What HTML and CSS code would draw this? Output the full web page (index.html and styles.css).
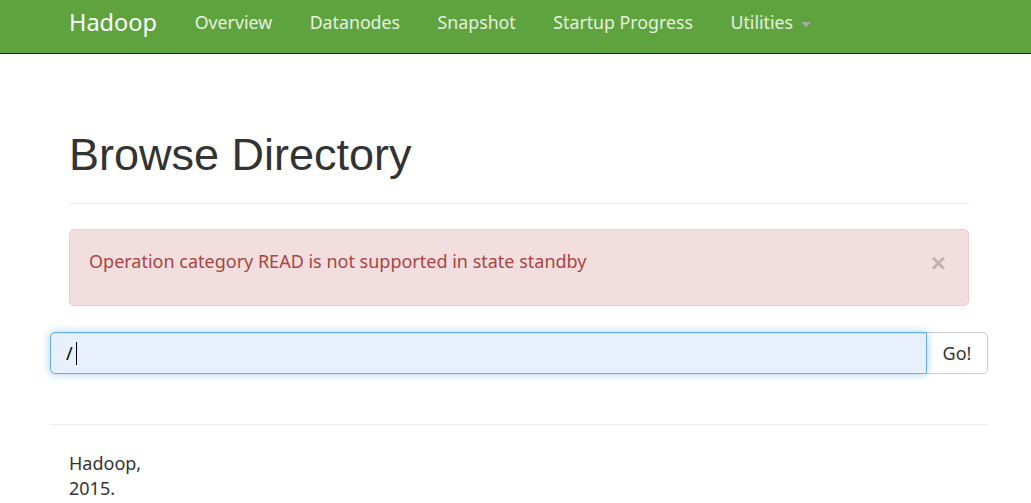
FILE: index.html
```html
<!DOCTYPE html>
<html lang="en">
<head>
<meta charset="utf-8">
<title>Browsing HDFS</title>
<link rel="stylesheet" href="styles.css">
</head>
<body>
<header class="navbar">
  <div class="navbar-inner">
    <a class="brand" href="#">Hadoop</a>
    <nav class="nav">
      <a class="nav-link" href="#">Overview</a>
      <a class="nav-link" href="#">Datanodes</a>
      <a class="nav-link" href="#">Snapshot</a>
      <a class="nav-link" href="#">Startup Progress</a>
      <a class="nav-link" href="#">Utilities <span class="caret"></span></a>
    </nav>
  </div>
</header>

<main class="container">
  <div class="page-header">
    <h1>Browse Directory</h1>
  </div>

  <div class="alert">
    <button type="button" class="close">&times;</button>
    <div class="alert-body">Operation category READ is not supported in state standby</div>
  </div>

  <div class="row">
    <form class="input-group">
      <div class="input-wrap">
        <input class="form-control" type="text" value="/">
        <span class="text-caret"></span>
      </div>
      <button type="button" class="btn">Go!</button>
    </form>
  </div>

  <div class="row">
    <hr class="footer-rule">
    <footer class="footer">
      <p class="footer-text">Hadoop, 2015.</p>
    </footer>
  </div>
</main>
</body>
</html>
```

FILE: styles.css
```css
* { box-sizing: border-box; }

html, body {
  margin: 0;
  padding: 0;
  background: #fff;
}

body {
  font-family: "Noto Sans", "Open Sans", sans-serif;
  font-size: 18px;
  line-height: 25px;
  color: #333;
}

a { text-decoration: none; }

.navbar {
  background: #5fa33e;
  border-bottom: 1px solid #1c2a14;
  height: 54px;
  margin-bottom: 26px;
}

.navbar-inner {
  display: flex;
  align-items: flex-start;
  margin-left: 50px;
  width: 938px;
  padding: 10px 0 0 0;
}

.brand {
  color: #fff;
  font-size: 23.5px;
  line-height: 25px;
  padding: 0 19px;
}

.nav {
  display: flex;
}

.nav-link {
  color: #e6f0e0;
  font-size: 17.75px;
  padding: 0 18.75px;
  line-height: 25px;
}

.caret {
  display: inline-block;
  width: 0;
  height: 0;
  margin-left: 3px;
  vertical-align: middle;
  border-top: 5px solid #a8a8a8;
  border-left: 5px solid transparent;
  border-right: 5px solid transparent;
}

.container {
  display: flow-root;
  margin-left: 50px;
  width: 938px;
  padding: 0 19px;
}

.page-header {
  margin: 50px 0 25px;
  padding-bottom: 11px;
  border-bottom: 1px solid #eee;
}

h1 {
  margin: 26px 0 12px;
  font-family: "Liberation Sans", Arial, sans-serif;
  font-weight: 500;
  font-size: 45px;
  line-height: 49.5px;
  color: #333;
}

.alert {
  position: relative;
  background: #f2dede;
  border: 1px solid #ebccd1;
  border-radius: 5px;
  color: #a94442;
  padding: 19px 44px 31px 19px;
  margin-bottom: 26px;
}

.close {
  position: absolute;
  right: 22px;
  top: 20px;
  padding: 0;
  border: 0;
  background: transparent;
  font-family: "Liberation Sans", Arial, sans-serif;
  font-size: 26px;
  font-weight: bold;
  line-height: 26px;
  color: #000;
  opacity: 0.2;
  text-shadow: 0 1px 0 #fff;
  cursor: pointer;
}

.row {
  margin: 0 -19px;
}

.input-group {
  display: flex;
  margin: 0;
}

.input-wrap {
  position: relative;
  flex: 1;
  display: flex;
}

.form-control {
  flex: 1;
  height: 42px;
  padding: 6px 15px;
  font-family: "Noto Sans", "Open Sans", sans-serif;
  font-size: 18px;
  color: #000;
  background: #e8f0fe;
  border: 1px solid #66afe9;
  border-radius: 5px 0 0 5px;
  outline: 0;
  box-shadow: inset 0 1px 1px rgba(0,0,0,.075), 0 0 8px rgba(102,175,233,.6);
}

.text-caret {
  position: absolute;
  left: 26px;
  top: 10px;
  width: 1px;
  height: 23px;
  background: #000;
}

.btn {
  width: 62px;
  height: 42px;
  margin-left: -1px;
  font-family: "Noto Sans", "Open Sans", sans-serif;
  font-size: 18px;
  color: #333;
  background: #fff;
  border: 1px solid #ccc;
  border-radius: 0 5px 5px 0;
  padding: 0;
}

.footer-rule {
  margin: 50px 0 0;
  border: 0;
  border-top: 1px solid #eee;
}

.footer {
  padding: 26px 19px 0;
}

.footer-text {
  margin: 0;
  width: 90px;
}
```
